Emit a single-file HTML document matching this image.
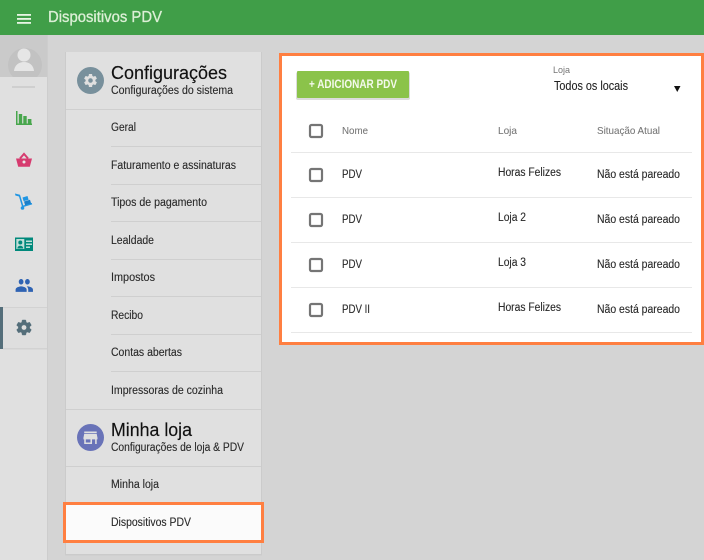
<!DOCTYPE html>
<html lang="pt"><head><meta charset="utf-8"><title>Dispositivos PDV</title>
<style>
html,body{margin:0;padding:0;width:704px;height:560px;overflow:hidden;background:#d4d4d4}
svg{display:block;font-family:"Liberation Sans",sans-serif}
.i{font-size:11.5px;fill:#2a2a2a;stroke:#2a2a2a;stroke-width:.12}
.h{font-size:10.5px;fill:#777;stroke:#777;stroke-width:.08}
</style></head><body>
<svg width="704" height="560" viewBox="0 0 704 560" xmlns="http://www.w3.org/2000/svg">
<rect width="704" height="560" fill="#d4d4d4"/>
<!-- sidebar -->
<rect x="0" y="35" width="47" height="525" fill="#e0e0e0"/>
<rect x="47" y="35" width="1" height="525" fill="#cdcdcd"/>
<rect x="0" y="35" width="47" height="42" fill="#cacaca"/>
<path d="M13 77A17 17 0 1 1 37 77Z" fill="#c2c2c2"/>
<circle cx="24" cy="55" r="6.500" fill="#e6e6e6"/>
<path d="M14 71c.5-6 5-9 10-9s9.500 3 10 9Z" fill="#e6e6e6"/>
<rect x="12" y="86" width="23" height="2" fill="#cfcfcf"/>
<!-- top bar -->
<rect width="704" height="35" fill="#409e48"/>
<rect x="17" y="14" width="14" height="1.800" fill="#e8f5e4"/><rect x="17" y="18" width="14" height="1.800" fill="#e8f5e4"/><rect x="17" y="22" width="14" height="1.800" fill="#e8f5e4"/>
<text x="48" y="22" font-size="15.500" fill="#dcefd6" stroke="#dcefd6" stroke-width=".3" textLength="114" lengthAdjust="spacingAndGlyphs">Dispositivos PDV</text>
<!-- sidebar icons -->
<path d="M16 111h1.500v12.500H32V125H16Z M18.800 114h3.400v9.500h-3.400Z M23.300 116h3.400v7.500h-3.400Z M27.800 119h3.600v4.500h-3.600Z" fill="#47a64c"/>
<path d="M16 158.500h16l-2.200 8.200H18.200Z" fill="#d63b6f"/>
<path d="M20 158.500l4-4.600 4 4.600" fill="none" stroke="#d63b6f" stroke-width="2"/>
<circle cx="24" cy="162" r="1.500" fill="#e8e8e8"/>
<g fill="#2196e3">
<path d="M15 193.500l5 1.300 3.300 10.700 8.500-2.600.4 1.500-10 3L19 196.500l-3.600-1Z"/>
<path d="M22.500 197.500l5-1.500 1.100 3.800-5 1.500Z"/>
<path d="M24 201.500l6-1.800 1.100 3.700-6 1.800Z" fill="#1b7fc9"/>
<circle cx="22.500" cy="208" r="1.800"/>
</g>
<rect x="15" y="237.500" width="18" height="13.500" fill="#00897b"/>
<rect x="16.300" y="239" width="8" height="10" fill="#bfded8"/>
<circle cx="20.300" cy="242.500" r="2" fill="#00897b"/>
<path d="M17.300 248.500c.3-2 1.500-2.800 3-2.800s2.700.8 3 2.800Z" fill="#00897b"/>
<rect x="26" y="240.500" width="6" height="1.500" fill="#bfded8"/><rect x="26" y="243.500" width="6" height="1.500" fill="#bfded8"/><rect x="26" y="246.500" width="4" height="1.500" fill="#bfded8"/>
<path transform="translate(14.800,274.400) scale(.79,.92)" fill="#2f63b3" d="M16 11c1.660 0 2.990-1.340 2.990-3S17.660 5 16 5c-1.660 0-3 1.340-3 3s1.340 3 3 3zm-8 0c1.660 0 2.990-1.340 2.990-3S9.660 5 8 5C6.340 5 5 6.340 5 8s1.340 3 3 3zm0 2c-2.330 0-7 1.170-7 3.500V19h14v-2.500c0-2.330-4.670-3.500-7-3.500zm8 0c-.290 0-.620.020-.970.050 1.160.840 1.970 1.970 1.970 3.450V19h6v-2.500c0-2.330-4.670-3.500-7-3.500z"/>
<rect x="0" y="307" width="47" height="42" fill="#dedede"/>
<rect x="3" y="307" width="44" height="1" fill="#d2d2d2"/><rect x="3" y="348" width="44" height="1.500" fill="#d2d2d2"/>
<rect x="0" y="307" width="3" height="42" fill="#546e7a"/>
<path transform="translate(15,318.500) scale(.75)" fill="#546e7a" stroke="#546e7a" stroke-width=".6" d="M19.430 12.980c.040-.320.070-.640.070-.980s-.030-.660-.070-.980l2.110-1.650c.190-.150.240-.420.120-.640l-2-3.460c-.120-.220-.390-.300-.610-.220l-2.490 1c-.520-.400-1.080-.730-1.690-.980l-.380-2.650C14.460 2.180 14.250 2 14 2h-4c-.250 0-.460.180-.490.420l-.380 2.650c-.610.250-1.170.590-1.690.980l-2.490-1c-.230-.090-.490 0-.610.220l-2 3.460c-.130.220-.070.490.120.640l2.110 1.650c-.040.320-.070.650-.070.980s.030.660.070.980l-2.110 1.650c-.190.150-.240.420-.120.640l2 3.460c.120.220.390.300.610.220l2.490-1c.520.400 1.080.730 1.690.980l.380 2.650c.030.240.240.420.490.420h4c.250 0 .460-.180.490-.420l.380-2.650c.610-.250 1.170-.590 1.690-.980l2.490 1c.230.090.490 0 .610-.220l2-3.460c.120-.220.070-.490-.120-.64l-2.110-1.650zM12 15.500c-1.930 0-3.500-1.570-3.500-3.500s1.570-3.500 3.500-3.500 3.500 1.570 3.500 3.500-1.570 3.500-3.500 3.500z"/>
<!-- left panel -->
<rect x="65" y="52" width="197" height="503.500" fill="#cbcbcb"/>
<rect x="66" y="52" width="195" height="502" fill="#e0e0e0"/>
<circle cx="90.500" cy="80.500" r="13.500" fill="#78909c"/>
<path transform="translate(82.700,72.700) scale(.65)" fill="#e0e0e0" d="M19.430 12.980c.040-.320.070-.640.070-.980s-.030-.660-.070-.980l2.110-1.650c.190-.150.240-.420.120-.640l-2-3.460c-.120-.220-.390-.300-.610-.220l-2.490 1c-.520-.400-1.080-.730-1.690-.980l-.380-2.650C14.460 2.180 14.250 2 14 2h-4c-.250 0-.460.180-.490.420l-.380 2.650c-.610.250-1.170.590-1.690.980l-2.490-1c-.230-.090-.490 0-.610.220l-2 3.460c-.130.220-.070.490.120.640l2.110 1.650c-.040.320-.070.650-.070.980s.030.660.070.980l-2.110 1.650c-.190.150-.240.420-.120.640l2 3.460c.120.220.390.300.610.220l2.490-1c.520.400 1.080.730 1.690.980l.380 2.650c.030.240.240.420.49.420h4c.250 0 .460-.180.490-.420l.380-2.650c.610-.250 1.170-.590 1.690-.980l2.490 1c.230.090.490 0 .610-.220l2-3.460c.120-.220.070-.49-.12-.64l-2.110-1.650zM12 15.500c-1.930 0-3.500-1.570-3.500-3.500s1.570-3.500 3.500-3.500 3.500 1.570 3.500 3.500-1.570 3.500-3.500 3.500z"/>
<text x="111" y="79" font-size="18.500" fill="#111" stroke="#111" stroke-width=".15" textLength="116" lengthAdjust="spacingAndGlyphs">Configurações</text>
<text x="111" y="94" class="i" textLength="122" lengthAdjust="spacingAndGlyphs">Configurações do sistema</text>
<g fill="#cfcfcf">
<rect x="66" y="109" width="195" height="1"/>
<rect x="111" y="146" width="150" height="1"/><rect x="111" y="184" width="150" height="1"/>
<rect x="111" y="221" width="150" height="1"/><rect x="111" y="259" width="150" height="1"/>
<rect x="111" y="296" width="150" height="1"/><rect x="111" y="334" width="150" height="1"/>
<rect x="111" y="371" width="150" height="1"/>
<rect x="66" y="409" width="195" height="1"/><rect x="66" y="466" width="195" height="1"/>
</g>
<text x="111" y="131" class="i" textLength="25" lengthAdjust="spacingAndGlyphs">Geral</text>
<text x="111" y="169" class="i" textLength="125" lengthAdjust="spacingAndGlyphs">Faturamento e assinaturas</text>
<text x="111" y="206" class="i" textLength="96" lengthAdjust="spacingAndGlyphs">Tipos de pagamento</text>
<text x="111" y="244" class="i" textLength="43" lengthAdjust="spacingAndGlyphs">Lealdade</text>
<text x="111" y="281" class="i" textLength="44" lengthAdjust="spacingAndGlyphs">Impostos</text>
<text x="111" y="319" class="i" textLength="32" lengthAdjust="spacingAndGlyphs">Recibo</text>
<text x="111" y="356" class="i" textLength="71" lengthAdjust="spacingAndGlyphs">Contas abertas</text>
<text x="111" y="394" class="i" textLength="112" lengthAdjust="spacingAndGlyphs">Impressoras de cozinha</text>
<circle cx="90.500" cy="437.500" r="13.500" fill="#6973b8"/>
<path transform="translate(81.100,428.400) scale(.78)" fill="#e0e0e0" d="M20 4H4v2h16V4zm1 10v-2l-1-5H4l-1 5v2h1v6h10v-6h4v6h2v-6h1zm-9 4H6v-4h6v4z"/>
<text x="111" y="436" font-size="18.500" fill="#111" stroke="#111" stroke-width=".15" textLength="81" lengthAdjust="spacingAndGlyphs">Minha loja</text>
<text x="111" y="451" class="i" textLength="133" lengthAdjust="spacingAndGlyphs">Configurações de loja &amp; PDV</text>
<text x="111" y="488" class="i" textLength="48" lengthAdjust="spacingAndGlyphs">Minha loja</text>
<rect x="64.500" y="503.500" width="198" height="38" fill="#fbfbfb" stroke="#ff7f41" stroke-width="3"/>
<text x="111" y="526" class="i" textLength="80" lengthAdjust="spacingAndGlyphs">Dispositivos PDV</text>
<!-- right panel -->
<rect x="280.500" y="54.500" width="422" height="289" fill="#fff" stroke="#ff7f41" stroke-width="3"/>
<rect x="296" y="72" width="114" height="28" rx="2" fill="#dcdcdc"/>
<rect x="297" y="71" width="112" height="27" rx="1" fill="#8bc34a"/>
<text x="309" y="88" font-size="12" font-weight="bold" fill="#f4f9ec" textLength="88" lengthAdjust="spacingAndGlyphs">+ ADICIONAR PDV</text>
<text x="553" y="73" font-size="9.500" fill="#757575" textLength="17" lengthAdjust="spacingAndGlyphs">Loja</text>
<text x="554" y="90" font-size="12.500" fill="#222" stroke="#222" stroke-width=".1" textLength="74" lengthAdjust="spacingAndGlyphs">Todos os locais</text>
<path d="M674 86h6.500l-3.250 6Z" fill="#111"/>
<g fill="#e8e8e8">
<rect x="291" y="152" width="401" height="1"/><rect x="291" y="197" width="401" height="1"/>
<rect x="291" y="242" width="401" height="1"/><rect x="291" y="287" width="401" height="1"/>
<rect x="291" y="332" width="401" height="1"/>
</g>
<g fill="none" stroke="#757575" stroke-width="2.200">
<rect x="310" y="125" width="12" height="12" rx="1.500"/>
<rect x="310" y="169" width="12" height="12" rx="1.500"/>
<rect x="310" y="214" width="12" height="12" rx="1.500"/>
<rect x="310" y="259" width="12" height="12" rx="1.500"/>
<rect x="310" y="304" width="12" height="12" rx="1.500"/>
</g>
<text x="342" y="134" class="h" textLength="26" lengthAdjust="spacingAndGlyphs">Nome</text>
<text x="498" y="134" class="h" textLength="19" lengthAdjust="spacingAndGlyphs">Loja</text>
<text x="597" y="134" class="h" textLength="63" lengthAdjust="spacingAndGlyphs">Situação Atual</text>
<text x="342" y="178" class="i" textLength="20" lengthAdjust="spacingAndGlyphs">PDV</text>
<text x="498" y="176" class="i" textLength="63" lengthAdjust="spacingAndGlyphs">Horas Felizes</text>
<text x="597" y="178" class="i" textLength="83" lengthAdjust="spacingAndGlyphs">Não está pareado</text>
<text x="342" y="223" class="i" textLength="20" lengthAdjust="spacingAndGlyphs">PDV</text>
<text x="498" y="221" class="i" textLength="28" lengthAdjust="spacingAndGlyphs">Loja 2</text>
<text x="597" y="223" class="i" textLength="83" lengthAdjust="spacingAndGlyphs">Não está pareado</text>
<text x="342" y="268" class="i" textLength="20" lengthAdjust="spacingAndGlyphs">PDV</text>
<text x="498" y="266" class="i" textLength="28" lengthAdjust="spacingAndGlyphs">Loja 3</text>
<text x="597" y="268" class="i" textLength="83" lengthAdjust="spacingAndGlyphs">Não está pareado</text>
<text x="342" y="313" class="i" textLength="28" lengthAdjust="spacingAndGlyphs">PDV II</text>
<text x="498" y="311" class="i" textLength="63" lengthAdjust="spacingAndGlyphs">Horas Felizes</text>
<text x="597" y="313" class="i" textLength="83" lengthAdjust="spacingAndGlyphs">Não está pareado</text>
</svg>
</body></html>
